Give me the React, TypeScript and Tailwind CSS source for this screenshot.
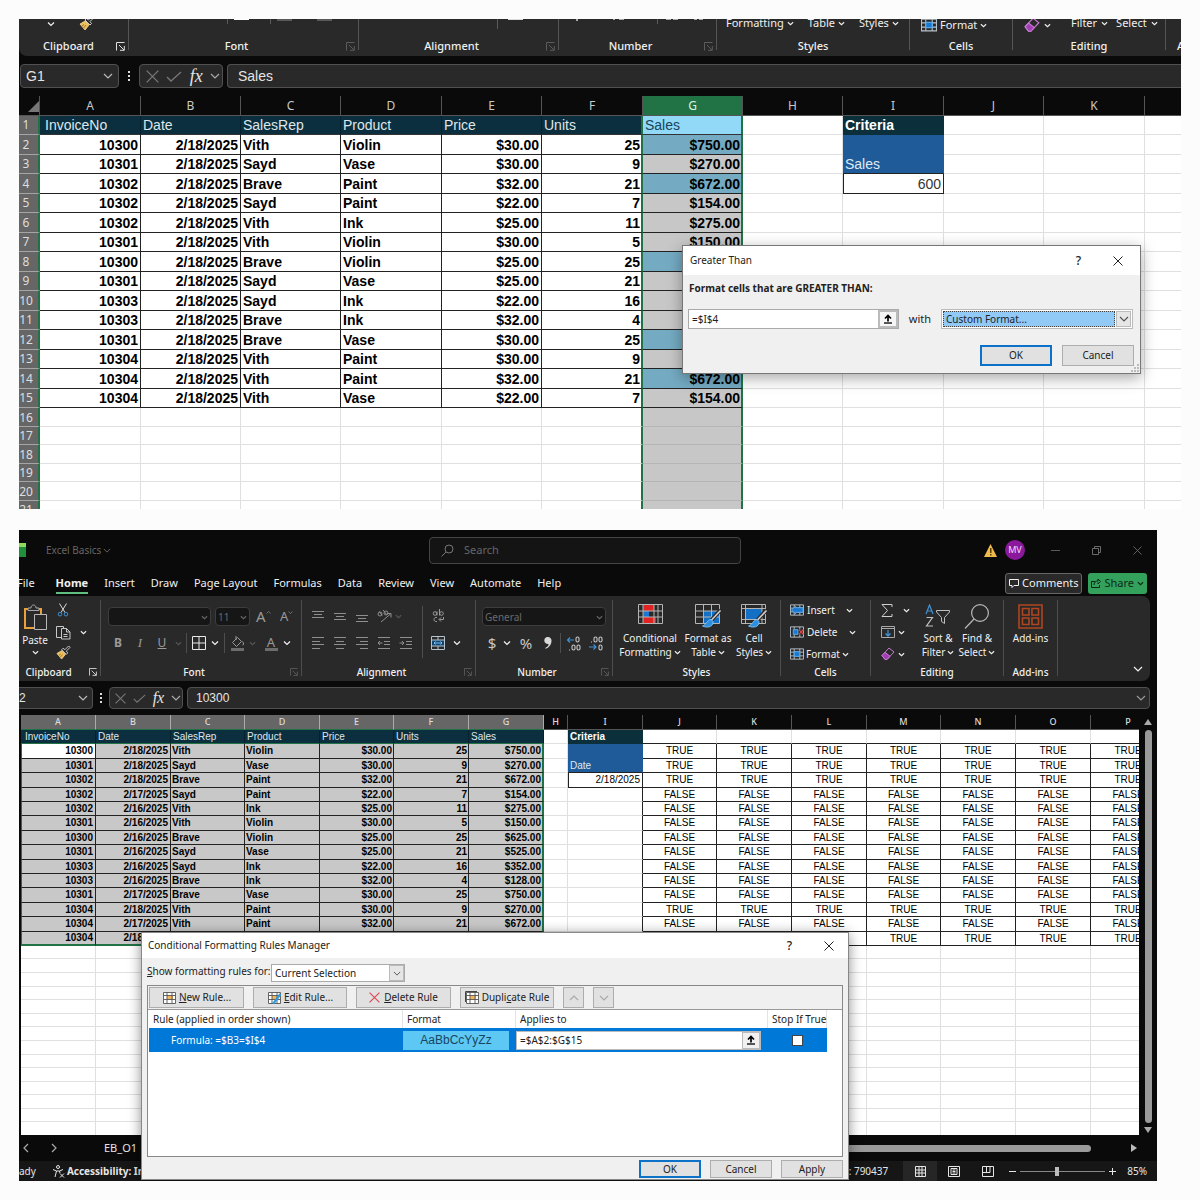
import type { ReactNode } from "react";

const HEADERS = ["InvoiceNo", "Date", "SalesRep", "Product", "Price", "Units", "Sales"];
const RIGHT_ALIGNED = [0, 1, 4, 5, 6];

const SALES_ROWS = [
  ["10300", "2/18/2025", "Vith", "Violin", "$30.00", "25", "$750.00"],
  ["10301", "2/18/2025", "Sayd", "Vase", "$30.00", "9", "$270.00"],
  ["10302", "2/18/2025", "Brave", "Paint", "$32.00", "21", "$672.00"],
  ["10302", "2/18/2025", "Sayd", "Paint", "$22.00", "7", "$154.00"],
  ["10302", "2/18/2025", "Vith", "Ink", "$25.00", "11", "$275.00"],
  ["10301", "2/18/2025", "Vith", "Violin", "$30.00", "5", "$150.00"],
  ["10300", "2/18/2025", "Brave", "Violin", "$25.00", "25", "$625.00"],
  ["10301", "2/18/2025", "Sayd", "Vase", "$25.00", "21", "$525.00"],
  ["10303", "2/18/2025", "Sayd", "Ink", "$22.00", "16", "$352.00"],
  ["10303", "2/18/2025", "Brave", "Ink", "$32.00", "4", "$128.00"],
  ["10301", "2/18/2025", "Brave", "Vase", "$30.00", "25", "$750.00"],
  ["10304", "2/18/2025", "Vith", "Paint", "$30.00", "9", "$270.00"],
  ["10304", "2/18/2025", "Vith", "Paint", "$32.00", "21", "$672.00"],
  ["10304", "2/18/2025", "Vith", "Vase", "$22.00", "7", "$154.00"],
];

const DATES = [
  "2/18/2025", "2/18/2025", "2/18/2025", "2/17/2025", "2/16/2025", "2/16/2025", "2/16/2025",
  "2/16/2025", "2/16/2025", "2/16/2025", "2/17/2025", "2/18/2025", "2/17/2025", "2/18/2025",
];

const DATE_ROWS = SALES_ROWS.map((row, i) => row.map((v, c) => (c === 1 ? DATES[i] : v)));

/* ---------- icons ---------- */

function Chevron({ size = 8, className = "" }: { size?: number; className?: string }) {
  return (
    <svg width={size} height={size} viewBox="0 0 8 8" className={`shrink-0 ${className}`} fill="none" stroke="currentColor" strokeWidth="1.3">
      <path d="M1 2.6 4 5.4 7 2.6" />
    </svg>
  );
}

function ThinChevron({ className = "", up = false }: { className?: string; up?: boolean }) {
  return (
    <svg width="10" height="6" viewBox="0 0 10 6" className={`shrink-0 ${className}`} fill="none" stroke="currentColor" strokeWidth="1.2">
      <path d={up ? "M1 5 5 1 9 5" : "M1 1 5 5 9 1"} />
    </svg>
  );
}

function Launcher({ size, dim }: { size: number; dim: boolean }) {
  return (
    <svg width={size} height={size} viewBox="0 0 9 9" fill="none" stroke={dim ? "#5c5c5c" : "#e0e0e0"} strokeWidth="1">
      <path d="M.5 8.5V.5h8M3 3l5 5M8.3 4v4.3H4" />
    </svg>
  );
}

function Lines({ rows }: { rows: [number, number, number][] }) {
  return (
    <svg width="14" height="14" viewBox="0 0 14 14" stroke="#8f8f8f" strokeWidth="1">
      {rows.map(([y, a, b]) => (
        <path key={y} d={`M${a} ${y}.5H${b}`} />
      ))}
    </svg>
  );
}

function Brush({ size = 16 }: { size?: number }) {
  return (
    <svg width={size} height={size} viewBox="0 0 16 16" fill="none">
      <path d="M1 9 6 6l4 4-4 5z" fill="#efbf58" stroke="#f6d899" strokeWidth=".8" />
      <path d="m3 11 2-1.500M4.500 13 7 10" stroke="#8a6420" strokeWidth=".8" />
      <path d="m6 5 5 5 1.500-1.500L11 6.500 15 2.500 13.500 1 9.500 5 7.500 3.500z" fill="#292929" stroke="#cfcfcf" />
    </svg>
  );
}

function Eraser({ size = 14 }: { size?: number }) {
  return (
    <svg width={size} height={size} viewBox="0 0 14 14" fill="none" stroke="#c47bd0" strokeWidth="1">
      <path d="m1 8.500 7-7.500 5 4-7 7.500H4z" fill="#292929" />
      <path d="m1 8.500 3-3.200 5 4L6 12.500H4z" fill="#a33db5" />
    </svg>
  );
}

function CellGridIcon({ size, kind }: { size: number; kind: "insert" | "delete" | "format" }) {
  return (
    <svg width={size} height={size} viewBox="0 0 15 14" fill="none" stroke="#b9c2cb" strokeWidth="1">
      <path d="M.5 1.500h14v11H.5zM.5 5h14M.5 9h14M4.500 1.500v11M10.500 1.500v11" />
      {kind === "format" && <path d="M4.500 4.500h6v5h-6z" fill="#1b78d0" stroke="#5fb1f2" />}
      {kind === "insert" && <path d="M6 4.500h8v5H6L6 11 1.500 7 6 3z" fill="#1b78d0" stroke="#5fb1f2" />}
      {kind === "delete" && (
        <>
          <path d="M1 4h13v6H1z" fill="#292929" stroke="none" />
          <path d="M3.500 4.500h5v5h-5z" fill="#1b78d0" stroke="#5fb1f2" />
          <path d="m9.500 4.500 5 5m0-5-5 5" stroke="#e04848" strokeWidth="1.300" />
        </>
      )}
    </svg>
  );
}

function PasteIcon() {
  return (
    <svg width="26" height="27" viewBox="0 0 26 27" fill="none">
      <path d="M3 5h16v19H3z" stroke="#e9a13b" strokeWidth="2" />
      <path d="M6 6.500V4h3c0-4 5-4 5 0h3v2.500z" fill="#292929" stroke="#a8a8a8" />
      <path d="M12.500 10.500h12v15h-12z" fill="#292929" stroke="#b8b8b8" />
    </svg>
  );
}

function ScissorsIcon() {
  return (
    <svg width="12" height="14" viewBox="0 0 12 14" fill="none">
      <path d="M2.500.5 8 9.500M9.500.5 4 9.500" stroke="#d8d8d8" />
      <circle cx="3" cy="11.200" r="1.800" stroke="#3f93d6" />
      <circle cx="9" cy="11.200" r="1.800" stroke="#3f93d6" />
    </svg>
  );
}

function CopyIcon() {
  return (
    <svg width="15" height="15" viewBox="0 0 15 15" fill="none" stroke="#c8c8c8">
      <path d="M5 12.500H.5v-11h7v2" />
      <path d="M5.500 3.500h5l3.500 3.500v7h-8.500zM10.500 3.500V7H14M7.500 9.500h4M7.500 11.500h4" />
    </svg>
  );
}

function ConditionalIcon() {
  return (
    <svg width="25" height="21" viewBox="0 0 25 21">
      <path d="M5 1h11v6H5zM5 13h13v6H5z" fill="#e02424" />
      <path d="M5 7h6v6H5z" fill="#1b78d0" />
      <path d="M.5.5h24v19H.5zM.5 7h24M.5 13h24M5 .5v19M16 .5v19M20 .5v19" fill="none" stroke="#b5b5b5" />
    </svg>
  );
}

function StyledTableIcon({ cells }: { cells: boolean }) {
  return (
    <svg width="27" height="24" viewBox="0 0 27 24" fill="none">
      <path d={cells ? "M5 5h16v11H5z" : "M9 7h15v12H9z"} fill="#1470c4" />
      <path d={cells ? "M.5.5h24v19H.5zM.5 4.500h24M4.500.5v19M.5 15.500h24M21 .5v19" : "M.5.5h24v19H.5zM.5 7h24M.5 13h24M8.500.5v19M16.500.5v19"} stroke="#b5b5b5" />
      <path d="m25.500 6-9 10" stroke="#292929" strokeWidth="4" />
      <path d="m25.500 6.500-9 9.500" stroke="#d0d0d0" strokeWidth="1.600" />
      <path d="M16 15.500c-4 0-4 5-8.500 6.500 4 2 11 1.500 10.500-4.500z" fill="#2c8fe0" stroke="#8ecbf7" strokeWidth=".8" />
    </svg>
  );
}

function RuleIcon({ kind }: { kind: "new" | "edit" | "duplicate" }) {
  return (
    <svg width="14" height="13" viewBox="0 0 14 13" fill="none">
      {kind === "duplicate" && <path d="M.5 11V.5H12" stroke="#444" />}
      <path d="M1.500 1.500h12v11h-12z" fill="#fff" />
      <path d="M5 4.500h6v4H5z" fill="#f6b45c" />
      <path d="M1.500 1.500h12v11h-12zM1.500 4.500h12M1.500 8.500h12M5 1.500v11M10 1.500v11" stroke="#555" strokeWidth=".9" />
      {kind === "edit" && <path d="m13.500 3-6 8-1.500 1.500" stroke="#2f9be0" strokeWidth="2.400" />}
    </svg>
  );
}

function CollapseRefIcon() {
  return (
    <svg width="10" height="10" viewBox="0 0 10 10" fill="none" stroke="#000">
      <path d="M5 1v6.500M2 4.500l3-3 3 3" strokeWidth="1.700" />
      <path d="M1 9h8" strokeWidth="1.300" />
    </svg>
  );
}

function CloseX({ size = 10, className = "" }: { size?: number; className?: string }) {
  return (
    <svg width={size} height={size} viewBox="0 0 10 10" className={className} fill="none" stroke="currentColor">
      <path d="m.5.5 9 9m0-9-9 9" />
    </svg>
  );
}

/* ---------- ribbon ---------- */

type GroupProps = {
  label: string;
  width: string;
  launcher?: "on" | "off";
  large?: boolean;
  children?: ReactNode;
};

function Group({ label, width, launcher, large = false, children }: GroupProps) {
  return (
    <>
      <div className={`flex shrink-0 flex-col ${width}`}>
        <div className="min-h-0 flex-1">{children}</div>
        <div className={large ? "flex h-5 items-center text-[11px] font-medium" : "flex h-[18px] items-center text-[10px] font-medium"}>
          <span className="flex-1 text-center whitespace-nowrap">{label}</span>
          {launcher && (
            <button aria-label={`${label} settings`} className="flex w-[14px] items-center justify-end pr-[3px]">
              <Launcher size={large ? 9 : 8} dim={launcher === "off"} />
            </button>
          )}
        </div>
      </div>
      <div className={large ? "mb-[6px] w-px bg-[#555]" : "mt-1 mb-[5px] w-px bg-[#4d4d4d]"} />
    </>
  );
}

function IconButton({ label, width = "w-[22px]", className = "", children }: { label: string; width?: string; className?: string; children: ReactNode }) {
  return (
    <button aria-label={label} className={`flex h-5 shrink-0 items-center justify-center text-[#9a9a9a] ${width} ${className}`}>
      {children}
    </button>
  );
}

function BigButton({ icon, top, bottom, width }: { icon: ReactNode; top: string; bottom?: string; width: string }) {
  return (
    <button className={`flex flex-col items-center pt-2 text-[10px] leading-[14px] ${width}`}>
      <span className="flex h-[27px] items-start justify-center">{icon}</span>
      <span className="whitespace-nowrap">{top}</span>
      {bottom && (
        <span className="flex items-center gap-[2px] whitespace-nowrap">
          {bottom}
          <Chevron size={7} />
        </span>
      )}
    </button>
  );
}

function CroppedRibbon() {
  return (
    <div className="h-[37px] overflow-hidden bg-[#0a0a0a]">
      <div className="flex h-[37px] rounded-bl-lg bg-[#292929] pl-1 text-[#f0f0f0]">
        <Group label="Clipboard" width="w-[105px]" launcher="on" large>
          <div className="flex pl-6">
            <Chevron className="mt-[1px]" />
            <span className="-mt-[4px] ml-6"><Brush /></span>
          </div>
        </Group>
        <Group label="Font" width="w-[229px]" launcher="off" large>
          <svg width="229" height="8" fill="#5a5a5a">
            <path d="M98 0h1v5h-1zM141 0h1v5h-1zM148 0h15v2h-15zM188 0h15v2h-15z" />
            <path d="M105 0h15v1h-15z" fill="#fff" />
          </svg>
        </Group>
        <Group label="Alignment" width="w-[199px]" launcher="off" large>
          <svg width="199" height="12" fill="#5a5a5a">
            <path d="M138 0h1v10h-1z" />
            <path d="M149 0h15v1h-15z" fill="#ddd" />
          </svg>
        </Group>
        <Group label="Number" width="w-[157px]" launcher="off" large>
          <svg width="157" height="8" fill="#aaa">
            <path d="M98 0h1v5h-1z" fill="#5a5a5a" />
            <path d="M17 0h2v2h-2zM54 0h2v1h-2zM60 0h5v1h-5zM107 0h5v1h-5zM114 0h5v1h-5zM135 0h3v1h-3zM140 0h4v1h-4z" />
          </svg>
        </Group>
        <Group label="Styles" width="w-[192px]" large>
          <div className="-mt-[3px] flex gap-[14px] pl-[9px] text-[11px] leading-[14px]">
            {["Formatting", "Table", "Styles"].map((t) => (
              <button key={t} className="flex items-center gap-[3px]">
                {t}
                <Chevron size={7} />
              </button>
            ))}
          </div>
        </Group>
        <Group label="Cells" width="w-[102px]" large>
          <button className="-mt-[2px] flex items-center gap-[3px] pl-[11px] text-[11px] leading-[14px]">
            <CellGridIcon size={16} kind="format" />
            Format
            <Chevron size={7} />
          </button>
        </Group>
        <Group label="Editing" width="w-[152px]" large>
          <div className="-mt-[3px] flex items-start pl-[11px] text-[11px] leading-[14px]">
            <button aria-label="Clear" className="flex h-[18px] items-center gap-1">
              <Eraser size={16} />
              <Chevron size={7} />
            </button>
            <button className="ml-5 flex items-center gap-1">
              Filter
              <Chevron size={7} />
            </button>
            <button className="ml-2 flex items-center gap-1">
              Select
              <Chevron size={7} />
            </button>
          </div>
        </Group>
        <div className="flex flex-1 items-end overflow-hidden pl-[11px] text-[11px] leading-5 font-medium whitespace-nowrap">Add-ins</div>
      </div>
    </div>
  );
}

const top3: [number, number, number][] = [[2, 1, 13], [5, 3, 11], [8, 1, 13]];
const mid3: [number, number, number][] = [[4, 1, 13], [7, 3, 11], [10, 1, 13]];
const bot3: [number, number, number][] = [[6, 1, 13], [9, 3, 11], [12, 1, 13]];
const left4: [number, number, number][] = [[1, 1, 13], [5, 1, 9], [8, 1, 13], [12, 1, 9]];
const center4: [number, number, number][] = [[1, 1, 13], [5, 3, 11], [8, 1, 13], [12, 3, 11]];
const right4: [number, number, number][] = [[1, 1, 13], [5, 5, 13], [8, 1, 13], [12, 5, 13]];

function IndentIcon({ out = false }: { out?: boolean }) {
  return (
    <svg width="14" height="14" viewBox="0 0 14 14" fill="none" stroke="#8f8f8f">
      <path d="M1 1.500h12M7 5.500h6M7 8.500h6M1 12.500h12" />
      <path d={out ? "M5.500 7H1m2-2L1 7l2 2" : "M.5 7H5M3 5l2 2-2 2"} />
    </svg>
  );
}

function DecimalIcon({ more = false }: { more?: boolean }) {
  return (
    <svg width="15" height="15" viewBox="0 0 15 15" fill="none" stroke="#c8c8c8" strokeWidth="1.100">
      {more ? (
        <>
          <rect x="10" y="1" width="3" height="5" rx="1.500" />
          <rect x="6" y="9" width="3" height="5" rx="1.500" />
          <rect x="11" y="9" width="3" height="5" rx="1.500" />
          <path d="M3.500 13.500v1" />
          <path d="M8 4H1.500M4 1.500 1.500 4 4 6.500" stroke="#3f93d6" />
        </>
      ) : (
        <>
          <rect x="6" y="1" width="3" height="5" rx="1.500" />
          <rect x="11" y="1" width="3" height="5" rx="1.500" />
          <rect x="11" y="9" width="3" height="5" rx="1.500" />
          <path d="M3.500 5.500v1" />
          <path d="M1 11h7M5.500 8.500 8 11l-2.500 2.500" stroke="#3f93d6" />
        </>
      )}
    </svg>
  );
}

function Divider({ className = "" }: { className?: string }) {
  return <div className={`w-px bg-[#4d4d4d] ${className}`} />;
}

function DarkSelect({ label, value, width }: { label: string; value: string; width: string }) {
  return (
    <div className={`relative h-[19px] rounded border border-[#3d3d3d] bg-[#161616] ${width}`}>
      <select aria-label={label} className="block h-full w-full appearance-none pl-[2px] text-[10px] leading-none text-[#6a6a6a]">
        <option>{value}</option>
      </select>
      <Chevron size={7} className="pointer-events-none absolute top-[6px] right-[2px] text-[#666]" />
    </div>
  );
}

function Ribbon() {
  return (
    <div className="mr-[7px] h-[85px] overflow-hidden rounded-r-lg bg-[#292929] text-[#f0f0f0]">
      <div className="-ml-2 flex h-full">
        <Group label="Clipboard" width="w-[89px]" launcher="on">
          <div className="flex pl-[7px]">
            <button className="flex w-[34px] flex-col items-center pt-2 text-[10px] leading-[14px]">
              <PasteIcon />
              <span className="mt-[2px]">Paste</span>
              <Chevron size={7} className="mt-[2px]" />
            </button>
            <div className="flex flex-col pt-1">
              <IconButton label="Cut"><ScissorsIcon /></IconButton>
              <div className="flex">
                <IconButton label="Copy" className="mt-[2px]"><CopyIcon /></IconButton>
                <Chevron size={7} className="mt-[9px] ml-[6px]" />
              </div>
              <IconButton label="Format Painter"><Brush size={15} /></IconButton>
            </div>
          </div>
        </Group>
        <Group label="Font" width="w-[200px]" launcher="off">
          <div className="flex gap-1 pt-[11px] pl-[7px]">
            <DarkSelect label="Font" value="" width="w-[103px]" />
            <DarkSelect label="Font size" value="11" width="w-[35px]" />
            <div className="flex pl-[2px] text-[#9a9a9a]">
              <button aria-label="Increase font size" className="flex w-5 items-center text-[15px] leading-none">
                A<ThinChevron up className="-mt-2 h-[3px] w-[5px]" />
              </button>
              <button aria-label="Decrease font size" className="ml-1 flex w-5 items-center text-[13px] leading-none">
                A<ThinChevron className="-mt-2 h-[3px] w-[5px]" />
              </button>
            </div>
          </div>
          <div className="mt-[7px] flex items-center pl-[6px] text-[12px] text-[#9a9a9a]">
            <IconButton label="Bold"><b>B</b></IconButton>
            <IconButton label="Italic"><i className="font-['Liberation_Serif',serif] text-[13px]">I</i></IconButton>
            <IconButton label="Underline"><u>U</u></IconButton>
            <Chevron size={7} className="ml-[2px] text-[#555]" />
            <Divider className="ml-1 h-5" />
            <IconButton label="Borders" width="w-6">
              <svg width="14" height="14" viewBox="0 0 14 14" fill="none" stroke="#e8e8e8"><path d="M.5.5h13v13H.5zM7 .5v13M.5 7h13" /></svg>
            </IconButton>
            <Chevron className="text-[#f0f0f0]" />
            <Divider className="ml-[5px] h-5" />
            <IconButton label="Fill Color" width="w-6">
              <svg width="15" height="15" viewBox="0 0 15 15" fill="none" stroke="#9a9a9a">
                <path d="m2.500 6.500 5-5 4 4-5 5zM6 0v4M12.500 5.500c1.500 2 1.500 3.500 0 3.500" />
                <path d="M1 12h13v3H1z" fill="#6d6d6d" stroke="none" />
              </svg>
            </IconButton>
            <Chevron size={7} className="text-[#555]" />
            <IconButton label="Font Color" width="w-6" className="ml-[3px] flex-col">
              <span className="text-[13px] leading-[12px]">A</span>
              <span className="h-[3px] w-[13px] bg-[#6d6d6d]" />
            </IconButton>
            <Chevron className="text-[#f0f0f0]" />
          </div>
        </Group>
        <Group label="Alignment" width="w-[173px]" launcher="off">
          <div className="flex pt-[10px]">
            <div className="w-[120px] pl-[5px]">
              <div className="flex items-center">
                <IconButton label="Top Align"><Lines rows={top3} /></IconButton>
                <IconButton label="Middle Align"><Lines rows={mid3} /></IconButton>
                <IconButton label="Bottom Align"><Lines rows={bot3} /></IconButton>
                <IconButton label="Orientation">
                  <svg width="15" height="14" viewBox="0 0 15 14" fill="none" stroke="#8f8f8f">
                    <circle cx="3" cy="5" r="2" />
                    <path d="M5 6.500 2.500 2.500M6 1l4 5" /><circle cx="9" cy="4" r="2" />
                    <path d="M4 13 13.500 5M10 4.500h4v4" />
                  </svg>
                </IconButton>
                <Chevron size={7} className="text-[#555]" />
              </div>
              <div className="mt-[7px] flex">
                <IconButton label="Align Left"><Lines rows={left4} /></IconButton>
                <IconButton label="Center"><Lines rows={center4} /></IconButton>
                <IconButton label="Align Right"><Lines rows={right4} /></IconButton>
                <IconButton label="Decrease Indent"><IndentIcon out /></IconButton>
                <IconButton label="Increase Indent"><IndentIcon /></IconButton>
              </div>
            </div>
            <Divider className="h-[52px]" />
            <div className="pl-1">
              <IconButton label="Wrap Text">
                <svg width="13" height="14" viewBox="0 0 13 14" fill="none" stroke="#9a9a9a">
                  <circle cx="3" cy="4.500" r="1.800" /><path d="M5 2.500v4M7.500 0v6.500" /><circle cx="9.500" cy="4.500" r="1.800" />
                  <path d="M5 8.500c-4-1-4 5 0 4M11.500 8v2.500h-4M9 8.500l-2 2 2 2" />
                </svg>
              </IconButton>
              <div className="mt-[7px] flex items-center">
                <IconButton label="Merge">
                  <svg width="14" height="14" viewBox="0 0 14 14" fill="none" stroke="#b5c4d0">
                    <path d="M1 4h12v6H1z" fill="#12456f" stroke="none" />
                    <path d="M.5.5h13v13H.5zM.5 4h13M.5 10h13M7 .5V4M7 10v3.500" />
                    <path d="M3 7h8M4.500 5.500 3 7l1.500 1.500M9.500 5.500 11 7 9.500 8.500" stroke="#7fc0f0" />
                  </svg>
                </IconButton>
                <Chevron className="ml-1" />
              </div>
            </div>
          </div>
        </Group>
        <Group label="Number" width="w-[136px]" launcher="off">
          <div className="pt-[11px] pl-[6px]">
            <DarkSelect label="Number format" value="General" width="w-[124px]" />
          </div>
          <div className="mt-[7px] flex items-center pl-[5px]">
            <IconButton label="Currency"><span className="text-[15px] text-[#c8c8c8]">$</span></IconButton>
            <Chevron />
            <IconButton label="Percent" className="ml-1"><span className="text-[15px] text-[#c8c8c8]">%</span></IconButton>
            <IconButton label="Comma">
              <svg width="8" height="12" viewBox="0 0 8 12" fill="#d8d8d8"><path d="M4 0a3.500 3.500 0 0 1 3.500 3.800C7.500 8 5 10.500 1.500 12v-1.200C3.500 10 4.700 8.500 4.600 6.900A3.500 3.500 0 1 1 4 0z" /></svg>
            </IconButton>
            <Divider className="ml-[1px] h-5" />
            <IconButton label="Increase Decimal" width="w-6"><DecimalIcon more /></IconButton>
            <IconButton label="Decrease Decimal" width="w-5"><DecimalIcon /></IconButton>
          </div>
        </Group>
        <Group label="Styles" width="w-[167px]">
          <div className="flex pl-1">
            <BigButton icon={<ConditionalIcon />} top="Conditional" bottom="Formatting" width="w-[66px]" />
            <BigButton icon={<StyledTableIcon cells={false} />} top="Format as" bottom="Table" width="w-[50px]" />
            <BigButton icon={<StyledTableIcon cells />} top="Cell" bottom="Styles" width="w-[42px]" />
          </div>
        </Group>
        <Group label="Cells" width="w-[89px]">
          <div className="flex flex-col pt-[3px] pl-[9px] text-[10px]">
            <button className="flex h-[22px] items-center gap-[3px]">
              <CellGridIcon size={14} kind="insert" />
              <span className="w-9 text-left">Insert</span>
              <Chevron size={7} />
            </button>
            <button className="flex h-[22px] items-center gap-[3px]">
              <CellGridIcon size={14} kind="delete" />
              <span className="w-[39px] text-left">Delete</span>
              <Chevron size={7} />
            </button>
            <button className="flex h-[22px] items-center gap-[2px]">
              <CellGridIcon size={14} kind="format" />
              <span>Format</span>
              <Chevron size={7} />
            </button>
          </div>
        </Group>
        <Group label="Editing" width="w-[132px]">
          <div className="flex">
            <div className="flex w-[47px] flex-col pt-[3px] pl-[10px]">
              <button aria-label="AutoSum" className="flex h-[22px] items-center gap-[10px]">
                <svg width="12" height="13" viewBox="0 0 12 13" fill="none" stroke="#d0d0d0"><path d="M11 3V.5H1L6.500 6.500 1 12.500h10V10" /></svg>
                <Chevron size={7} />
              </button>
              <button aria-label="Fill" className="flex h-[22px] items-center gap-[3px]">
                <svg width="14" height="12" viewBox="0 0 14 12" fill="none" stroke="#a8a8a8">
                  <path d="M.5.5h13v11H.5zM.5 2.500h13" /><path d="M7 4v6M4.500 7.500 7 10l2.500-2.500" stroke="#3f93d6" strokeWidth="1.300" />
                </svg>
                <Chevron size={7} />
              </button>
              <button aria-label="Clear" className="flex h-[22px] items-center gap-[3px]">
                <Eraser />
                <Chevron size={7} />
              </button>
            </div>
            <BigButton
              width="w-[40px]"
              top="Sort &"
              bottom="Filter"
              icon={
                <svg width="26" height="24" viewBox="0 0 26 24" fill="none">
                  <path d="M1 10 4.500 1 8 10M2.300 7h4.400" stroke="#3f93d6" strokeWidth="1.200" />
                  <path d="M1.500 13.500h6L1.500 22h6.500" stroke="#c0c0c0" strokeWidth="1.200" />
                  <path d="M11.500 6.500h13v1.500l-5 5.500v6l-3-2v-4l-5-5.500z" stroke="#c0c0c0" />
                </svg>
              }
            />
            <BigButton
              width="w-[38px]"
              top="Find &"
              bottom="Select"
              icon={
                <svg width="26" height="26" viewBox="0 0 26 26" fill="none" stroke="#b8b8b8" strokeWidth="1.200">
                  <circle cx="16" cy="9" r="8.400" /><path d="M10 15 1 24.500" />
                </svg>
              }
            />
          </div>
        </Group>
        <Group label="Add-ins" width="w-[53px]">
          <BigButton
            width="w-[53px]"
            top="Add-ins"
            icon={
              <svg width="25" height="25" viewBox="0 0 25 25" fill="none" stroke="#b0451f" strokeWidth="1.600">
                <path d="M1 1h23v23H1zM4.500 4.500h6.500v6.500H4.500zM14 4.500h6.500v6.500H14zM4.500 14h6.500v6.500H4.500zM14 14h6.500v6.500H14z" />
              </svg>
            }
          />
        </Group>
        <div className="flex flex-1 items-end justify-end pr-[7px] pb-[9px]">
          <button aria-label="Collapse ribbon"><ThinChevron /></button>
        </div>
      </div>
    </div>
  );
}

/* ---------- formula bar ---------- */

function FormulaBar({ cell, value, large = false }: { cell: string; value: string; large?: boolean }) {
  const box = "flex items-center border border-[#505050] bg-[#292929]";
  return (
    <div className={`flex items-center bg-[#0a0a0a] font-['Liberation_Sans',sans-serif] text-[#e4e4e4] ${large ? "h-10 text-[14px]" : "h-[34px] pr-[7px] text-[12px]"}`}>
      <div className={`${box} shrink-0 ${large ? "ml-[1px] h-6 w-[99px] rounded pr-[5px] pl-[5px]" : "h-[22px] w-[74px] rounded-r border-l-0 pr-1"}`}>
        <input aria-label="Name box" defaultValue={cell} className="min-w-0 flex-1 bg-transparent outline-none" />
        <ThinChevron className="text-[#bbb]" />
      </div>
      <div className={`flex flex-col items-center gap-[2px] ${large ? "w-5" : "w-4"}`}>
        <i className="size-[2px] bg-[#ddd]" />
        <i className="size-[2px] bg-[#ddd]" />
        <i className="size-[2px] bg-[#ddd]" />
      </div>
      <div className={`${box} shrink-0 justify-between rounded ${large ? "h-6 w-[84px] px-[2px] pl-[6px]" : "h-[22px] w-[74px] pr-[1px] pl-[5px]"}`}>
        <button aria-label="Cancel"><CloseX size={large ? 13 : 11} className="text-[#777]" /></button>
        <button aria-label="Enter">
          <svg width={large ? 16 : 13} height="11" viewBox="0 0 16 11" fill="none" stroke="#777" strokeWidth="1.300"><path d="m1 6 4 4L15 1" /></svg>
        </button>
        <button aria-label="Insert function" className={`font-['Liberation_Serif',serif] italic ${large ? "text-[18px]" : "text-[16px]"} leading-none`}>fx</button>
        <ThinChevron className="text-[#aaa]" />
      </div>
      <div className={`${box} ml-1 min-w-0 flex-1 ${large ? "h-6 rounded-l border-r-0 pl-[10px]" : "h-[22px] rounded pr-[3px] pl-2"}`}>
        <input aria-label="Formula" defaultValue={value} className="min-w-0 flex-1 bg-transparent outline-none" />
        {!large && <ThinChevron className="text-[#999]" />}
      </div>
    </div>
  );
}

/* ---------- first sheet ---------- */

const SALES_COLS = [
  "w-[21px]", "w-[101px]", "w-[100px]", "w-[100px]", "w-[101px]", "w-[100px]", "w-[101px]",
  "w-[100px]", "w-[100px]", "w-[101px]", "w-[100px]", "w-[101px]", "",
];

const HIGHLIGHTED = [0, 2, 6, 10, 12];

function SalesSheet() {
  const letters = "ABCDEFGHIJK".split("");
  const grid = "border-r border-b border-[#e0e0e0] p-0";
  return (
    <table className="w-full table-fixed border-separate border-spacing-0 bg-white font-['Liberation_Sans',sans-serif] text-[14px] leading-[18px] text-black">
      <colgroup>
        {SALES_COLS.map((w, i) => <col key={i} className={w} />)}
      </colgroup>
      <thead className="bg-[#0a0a0a] font-['Noto_Sans',sans-serif] text-[12px] text-[#c9c9c9]">
        <tr className="h-5">
          <th className="border-r border-b border-[#555] p-0">
            <svg width="12" height="12" className="ml-auto" fill="#777"><path d="M12 1v11H1z" /></svg>
          </th>
          {letters.map((l) => (
            <th key={l} className={`border-r border-b border-[#555] p-0 font-normal ${l === "G" ? "bg-[#217346] text-[#d9f2e3]" : ""}`}>{l}</th>
          ))}
          <th className="border-b border-[#555] p-0" />
        </tr>
      </thead>
      <tbody>
        {Array.from({ length: 21 }, (_, i) => {
          const n = i + 1;
          const row = SALES_ROWS[i - 1];
          const height = n > 15 ? (n % 2 ? "h-[18px]" : "h-[19px]") : n % 2 ? "h-[19px]" : "h-[20px]";
          return (
            <tr key={n} className={`${height} ${n > 15 ? "leading-[17px]" : ""}`}>
              <th className="border-r-2 border-b border-r-[#217346] border-b-[#a5a5a5] bg-[#666] p-0 pr-[5px] font-['Noto_Sans',sans-serif] text-[12px] font-normal text-[#dedede]">{n}</th>
              {HEADERS.map((h, c) => {
                // the selection outline runs down both sides of the Sales column
                const side = c >= 5 ? "border-r-2 border-r-[#217346]" : n === 1 ? "border-r border-r-[#06222e]" : row ? "border-r border-r-[#222]" : "border-r border-r-[#e0e0e0]";
                if (n === 1)
                  return (
                    <th key={h} className={`border-b border-b-[#333] p-0 text-left font-normal ${side} ${c === 6 ? "bg-[#92d8f7] text-[#17455c]" : "bg-[#0c2f40] text-[#dfe7ea]"} ${c ? "pl-[2px]" : "pl-[5px]"}`}>{h}</th>
                  );
                const fill = c === 6 ? (row && HIGHLIGHTED.includes(i - 1) ? "bg-[#74abc3]" : "bg-[#c7c7c7]") : "";
                const bottom = row ? "border-b border-b-[#222]" : c === 6 ? "border-b border-b-[#b5b5b5]" : "border-b border-b-[#e0e0e0]";
                const align = RIGHT_ALIGNED.includes(c) ? (c >= 5 ? "pr-[1px] text-right" : "pr-[2px] text-right") : "pl-[2px] text-left";
                return <td key={h} className={`p-0 font-bold ${side} ${bottom} ${fill} ${align}`}>{row?.[c]}</td>;
              })}
              <td className={grid} />
              {n === 1 && <th className="border-r border-b border-[#0c2f3c] bg-[#0c2f3c] p-0 pl-[2px] text-left text-white">Criteria</th>}
              {n === 2 && <td rowSpan={2} className="border-r border-b border-r-[#205b99] border-b-[#222] bg-[#205b99] p-0 pl-[2px] align-bottom text-[#dfe9f4]">Sales</td>}
              {n === 4 && <td className="border-r border-b border-l border-[#222] p-0 pr-[2px] text-right text-[#333]">600</td>}
              {n > 4 && <td className={grid} />}
              <td className={grid} />
              <td className={grid} />
              <td className="border-b border-[#e0e0e0] p-0" />
            </tr>
          );
        })}
      </tbody>
    </table>
  );
}

function DialogTitle({ title }: { title: string }) {
  return (
    <div className="flex items-center bg-white text-[#222]">
      <h2 className="flex-1 text-[10px]">{title}</h2>
      <button aria-label="Help" className="text-[12px] font-medium">?</button>
      <button aria-label="Close" className="ml-8"><CloseX /></button>
    </div>
  );
}

function DialogButton({ children, primary = false, className = "" }: { children: ReactNode; primary?: boolean; className?: string }) {
  return (
    <button className={`flex items-center justify-center bg-[#e1e1e1] text-[10px] ${primary ? "border-2 border-[#0c72c9]" : "border border-[#adadad]"} ${className}`}>
      {children}
    </button>
  );
}

function GreaterThanDialog() {
  return (
    <div role="dialog" aria-label="Greater Than" className="absolute top-[149px] left-[663px] h-[129px] w-[459px] border border-[#777] bg-[#f0f0f0] text-[#222] shadow-[0_4px_14px_rgba(0,0,0,0.35)]">
      <div className="[&>div]:h-[29px] [&>div]:pr-[17px] [&>div]:pl-[7px]">
        <DialogTitle title="Greater Than" />
      </div>
      <label htmlFor="threshold" className="mt-[5px] ml-[6px] block text-[10px] leading-4 font-bold">Format cells that are GREATER THAN:</label>
      <div className="mt-[13px] flex h-5 items-center pr-[7px] pl-[5px] text-[10px]">
        <div className="flex h-5 w-[211px] border border-[#aaa] bg-white">
          <input id="threshold" defaultValue="=$I$4" className="min-w-0 flex-1 pl-[3px] outline-none" />
          <button aria-label="Collapse dialog" className="flex w-5 items-center justify-center border-2 border-[#bbb] bg-[#f5f5f5]"><CollapseRefIcon /></button>
        </div>
        <label htmlFor="format" className="flex-1 text-center text-[11px]">with</label>
        <div className="relative flex h-5 w-[192px] border border-[#bbb] bg-white p-[1px]">
          <select id="format" className="w-[172px] appearance-none border border-dotted border-[#444] bg-[#91c9f7] pl-[2px] leading-none">
            <option>Custom Format...</option>
          </select>
          <span className="pointer-events-none ml-[1px] flex flex-1 items-center justify-center border border-[#bbb] bg-[#e6e6e6]"><ThinChevron className="text-[#555]" /></span>
        </div>
      </div>
      <div className="mt-4 flex justify-end gap-[10px] pr-[6px]">
        <DialogButton primary className="h-[21px] w-[72px]">OK</DialogButton>
        <DialogButton className="h-[21px] w-[72px]">Cancel</DialogButton>
      </div>
      <svg width="8" height="8" className="absolute right-[1px] bottom-[1px]" fill="#bbb">
        <path d="M6 0h2v2H6zM3 3h2v2H3zM6 3h2v2H6zM0 6h2v2H0zM3 6h2v2H3zM6 6h2v2H6z" />
      </svg>
    </div>
  );
}

/* ---------- second sheet ---------- */

const DATE_COLS = [
  "w-[75px]", "w-[75px]", "w-[74px]", "w-[75px]", "w-[74px]", "w-[75px]", "w-[75px]", "w-[24px]",
  "w-[75px]", "w-[74px]", "w-[75px]", "w-[75px]", "w-[74px]", "w-[75px]", "w-[75px]", "w-[75px]",
];

const RULE_HITS = [2, 3, 4, 13, 15];

function DateSheet() {
  const letters = "ABCDEFGHIJKLMNOP".split("");
  const results = letters.slice(9);
  const grid = "border-r border-b border-[#e0e0e0] p-0";
  return (
    <table className="w-full table-fixed border-separate border-spacing-0 bg-white font-['Liberation_Sans',sans-serif] text-[10px] leading-[12px] text-black">
      <colgroup>
        {DATE_COLS.map((w, i) => <col key={i} className={w} />)}
      </colgroup>
      <thead className="font-['Noto_Sans',sans-serif] text-[9px] text-[#dcdcdc]">
        <tr className="h-[15px]">
          {letters.map((l, c) => (
            <th key={l} className={`border-r border-b p-0 font-medium ${c < 7 ? "border-r-[#aaa] border-b-[#217346] bg-[#666]" : "border-[#555] bg-[#0a0a0a]"}`}>{l}</th>
          ))}
        </tr>
      </thead>
      <tbody>
        {Array.from({ length: 29 }, (_, i) => {
          const n = i + 1;
          const row = DATE_ROWS[i - 1];
          const tall = n <= 15 ? n % 5 === 2 || n % 5 === 4 : false;
          const short = n > 15 && [1, 4, 6, 9, 11, 13].includes(n - 15);
          return (
            <tr key={n} className={tall ? "h-[15px]" : short ? "h-[13px]" : "h-[14px]"}>
              {HEADERS.map((h, c) => {
                if (n === 1)
                  return <th key={h} className={`border-r border-b border-r-[#06222e] border-b-[#217346] bg-[#0c2f40] p-0 text-left font-normal text-[#dfe7ea] ${c ? "pl-[2px]" : "pl-1"}`}>{h}</th>;
                const left = c === 0 && row ? "border-l border-l-[#217346]" : "";
                if (!row) return <td key={h} className={grid} />;
                const right = c === 6 ? "border-r-2 border-r-[#217346]" : "border-r border-r-[#222]";
                const bottom = n === 15 ? "border-b-2 border-b-[#217346]" : "border-b border-b-[#222]";
                const align = RIGHT_ALIGNED.includes(c) ? (c < 2 ? "pr-[2px] text-right" : "pr-[1px] text-right") : "pl-[1px] text-left";
                const fill = n === 2 && c === 0 ? "bg-white" : "bg-[#c8c8c8]";
                return <td key={h} className={`p-0 font-bold ${left} ${right} ${bottom} ${align} ${fill}`}>{row[c]}</td>;
              })}
              <td className={grid} />
              {n === 1 && <th className="border-r border-b border-[#0c2f3c] bg-[#0c2f3c] p-0 pl-[2px] text-left text-white">Criteria</th>}
              {n === 2 && <td rowSpan={2} className="border-r border-b border-r-[#205b99] border-b-[#222] bg-[#205b99] p-0 pl-[2px] align-bottom text-[#dfe9f4]">Date</td>}
              {n === 4 && <td className="border-r border-b border-l border-[#222] p-0 pr-[2px] text-right">2/18/2025</td>}
              {n > 4 && <td className={row ? "border-r border-b border-r-[#222] border-b-[#e0e0e0] p-0" : grid} />}
              {results.map((l) => (
                <td key={l} className={n <= 15 ? `border-b border-b-[#222] p-0 text-center ${n === 1 ? "border-r border-r-[#e0e0e0]" : "border-r border-r-[#222]"}` : grid}>
                  {row ? (RULE_HITS.includes(n) ? "TRUE" : "FALSE") : null}
                </td>
              ))}
            </tr>
          );
        })}
      </tbody>
    </table>
  );
}

function RulesDialog() {
  return (
    <div role="dialog" aria-label="Conditional Formatting Rules Manager" className="absolute top-[402px] left-[122px] flex h-[248px] w-[708px] flex-col border border-[#888] bg-[#f0f0f0] text-[10px] text-[#222] shadow-[0_2px_12px_rgba(0,0,0,0.45)]">
      <div className="[&>div]:h-[25px] [&>div]:pr-[14px] [&>div]:pl-[6px]">
        <DialogTitle title="Conditional Formatting Rules Manager" />
      </div>
      <div className="flex items-start pt-[6px] pl-[5px]">
        <label htmlFor="scope" className="w-[124px] leading-[14px] whitespace-nowrap"><u>S</u>how formatting rules for:</label>
        <div className="relative h-[18px] w-[134px] border border-[#aaa] bg-white">
          <select id="scope" className="block h-full w-full appearance-none pl-[3px] leading-none">
            <option>Current Selection</option>
          </select>
          <span className="pointer-events-none absolute top-0 right-0 flex h-4 w-[15px] items-center justify-center border border-[#bbb] bg-[#e6e6e6]"><ThinChevron className="h-[5px] w-2 text-[#555]" /></span>
        </div>
      </div>
      <div className="mx-[5px] mt-[3px] flex flex-1 flex-col border border-[#888]">
        <div className="flex h-[24px] items-center gap-[9px] border-b border-[#999] pl-[1px]">
          <DialogButton className="h-[21px] w-[95px] gap-[3px]"><RuleIcon kind="new" /><span><u>N</u>ew Rule...</span></DialogButton>
          <DialogButton className="h-[21px] w-[94px] gap-[3px]"><RuleIcon kind="edit" /><span><u>E</u>dit Rule...</span></DialogButton>
          <DialogButton className="h-[21px] w-[95px] gap-1"><CloseX size={11} className="text-[#e0444c]" /><span><u>D</u>elete Rule</span></DialogButton>
          <DialogButton className="h-[21px] w-[94px] gap-[3px]"><RuleIcon kind="duplicate" /><span>Dupli<u>c</u>ate Rule</span></DialogButton>
          <DialogButton className="h-[21px] w-[21px] text-[#aaa]"><ThinChevron up /></DialogButton>
          <DialogButton className="h-[21px] w-[21px] text-[#aaa]"><ThinChevron /></DialogButton>
        </div>
        <div className="flex-1 bg-white pl-[1px]">
          <table className="w-[678px] table-fixed border-separate border-spacing-0 text-left">
            <colgroup>
              <col className="w-[254px]" />
              <col className="w-[113px]" />
              <col />
              <col className="w-[59px]" />
            </colgroup>
            <thead>
              <tr className="h-[18px] [&>th]:border-r [&>th]:border-[#e3e3e3] [&>th]:p-0 [&>th]:pl-1 [&>th]:font-normal">
                <th>Rule (applied in order shown)</th>
                <th>Format</th>
                <th>Applies to</th>
                <th className="whitespace-nowrap">Stop If True</th>
              </tr>
            </thead>
            <tbody>
              <tr className="h-6 bg-[#0078d7] text-white">
                <td className="p-0 pl-[22px]">Formula: =$B3=$I$4</td>
                <td className="p-0">
                  <div className="h-[19px] w-[106px] bg-[#5ec8f5] text-center font-['Liberation_Sans',sans-serif] text-[12px] leading-[19px] text-[#174660]">AaBbCcYyZz</div>
                </td>
                <td className="p-0">
                  <div className="flex h-[19px] w-[245px] border border-[#bbb] bg-white text-[#222]">
                    <input aria-label="Applies to" defaultValue="=$A$2:$G$15" className="min-w-0 flex-1 pl-[3px] outline-none" />
                    <button aria-label="Collapse range" className="flex w-[18px] items-center justify-center border border-[#bbb] bg-[#f0f0f0]"><CollapseRefIcon /></button>
                  </div>
                </td>
                <td className="p-0 text-center">
                  <input type="checkbox" aria-label="Stop if true" className="size-[11px] appearance-none border border-[#444] bg-white align-middle" />
                </td>
              </tr>
            </tbody>
          </table>
        </div>
      </div>
      <div className="flex h-[22px] items-end justify-end gap-[9px] pr-[5px] pb-[1px]">
        <DialogButton primary className="h-[18px] w-[62px]">OK</DialogButton>
        <DialogButton className="h-[18px] w-[62px]">Cancel</DialogButton>
        <DialogButton className="h-[18px] w-[62px]">Apply</DialogButton>
      </div>
    </div>
  );
}

function TitleBar() {
  return (
    <header className="flex h-10 items-center">
      <div className="flex w-[410px] shrink-0 items-center text-[10px] text-[#666]">
        <svg width="7" height="14" viewBox="0 0 7 14"><path d="M0 0h7v5H0z" fill="#8fdc5c" /><path d="M0 4h7v10H0z" fill="#1f8f3c" /></svg>
        <button className="ml-5 flex items-center gap-[2px]">
          Excel Basics
          <ThinChevron className="h-[5px] w-2" />
        </button>
      </div>
      <div className="flex h-[27px] w-[312px] items-center gap-[10px] rounded border border-[#444] bg-[#141414] pl-[11px]">
        <svg width="13" height="13" viewBox="0 0 13 13" fill="none" stroke="#777"><circle cx="8" cy="5" r="4" /><path d="M5 8 .5 12.500" /></svg>
        <input aria-label="Search" placeholder="Search" className="flex-1 bg-transparent text-[11px] outline-none placeholder:text-[#666]" />
      </div>
      <div className="flex flex-1 items-center justify-end pr-[15px] text-[#6a6a6a]">
        <svg width="13" height="13" viewBox="0 0 13 13"><path d="M6.500 0 13 13H0z" fill="#f0bb4d" /><path d="M6 4h1.500v5H6zM6 10h1.500v1.500H6z" fill="#5a3b00" /></svg>
        <button aria-label="Account" className="ml-2 size-5 rounded-full bg-[#8a1a9b] text-[9px] text-[#f2d9f6]">MV</button>
        <button aria-label="Minimize" className="ml-[26px] flex h-3 w-[9px] items-center"><span className="block h-px w-full bg-[#5a5a5a]" /></button>
        <button aria-label="Restore" className="ml-8">
          <svg width="9" height="9" viewBox="0 0 9 9" fill="none" stroke="currentColor"><path d="M.5 2.500h6v6h-6zM2.500 2.500v-2h6v6h-2" /></svg>
        </button>
        <button aria-label="Close" className="ml-8"><CloseX size={9} /></button>
      </div>
    </header>
  );
}

const TABS = ["File", "Home", "Insert", "Draw", "Page Layout", "Formulas", "Data", "Review", "View", "Automate", "Help"];

function TabBar() {
  return (
    <div className="flex h-[26px] items-center text-[#f0f0f0]">
      <nav className="-ml-[2px] flex gap-4 text-[11px] leading-[18px]">
        {TABS.map((t) => (
          <a key={t} href="#" className={`mt-[2px] border-b-2 whitespace-nowrap first:mr-[5px] ${t === "Home" ? "border-[#5fbf7f] font-bold" : "border-transparent"}`}>{t}</a>
        ))}
      </nav>
      <div className="flex flex-1 justify-end gap-[6px] pr-[10px] text-[11px]">
        <button className="flex h-[21px] items-center gap-[3px] rounded-[3px] border border-[#666] bg-[#292929] px-[3px]">
          <svg width="10" height="9" viewBox="0 0 10 9" fill="none" stroke="currentColor"><path d="M.5.5h9v6H5l-2 2v-2H.5z" /></svg>
          Comments
        </button>
        <button className="flex h-[21px] items-center gap-[3px] rounded-[3px] bg-[#33a15c] px-[3px] text-[#0b2a16]">
          <svg width="10" height="10" viewBox="0 0 10 10" fill="none" stroke="currentColor"><path d="M4 3.500H.5v6h8V7M3 7c0-3 2-4 4-4V1l2.500 2.500L7 6V4.500" /></svg>
          Share
          <Chevron size={7} />
        </button>
      </div>
    </div>
  );
}

function StatusBar() {
  return (
    <footer className="flex h-5 items-center bg-[#161616] pr-[10px] text-[10px] text-[#e6e6e6]">
      <span>ady</span>
      <svg width="13" height="13" viewBox="0 0 13 13" className="ml-4" fill="none" stroke="currentColor">
        <circle cx="6" cy="2" r="1.500" /><path d="M1 4.500 4.500 6 3 12M11 4.500 7.500 6l.5 2M4.500 6h3M8 8.500l4 4m0-4-4 4" />
      </svg>
      <span className="ml-[2px] font-bold whitespace-nowrap">Accessibility: Investigate</span>
      <span className="ml-auto">Sum: 790437</span>
      <button aria-label="Normal view" className="ml-[15px] flex h-5 w-[34px] items-center justify-center bg-[#262626]">
        <svg width="11" height="11" viewBox="0 0 11 11" fill="none" stroke="currentColor"><path d="M.5.5h10v10H.5zM4 .5v10M7 .5v10M.5 4h10M.5 7h10" /></svg>
      </button>
      <button aria-label="Page layout view" className="flex w-[34px] justify-center">
        <svg width="12" height="11" viewBox="0 0 12 11" fill="none" stroke="currentColor"><path d="M.5.5h11v10H.5zM3 2.500h6v6H3zM4.500 4h3M4.500 5.500h3M4.500 7h3" /></svg>
      </button>
      <button aria-label="Page break view" className="flex w-[34px] justify-center">
        <svg width="12" height="11" viewBox="0 0 12 11" fill="none" stroke="currentColor"><path d="M.5.5h11v10H.5zM4.500.5v6M8 .5v6H.5" /></svg>
      </button>
      <button aria-label="Zoom out" className="ml-1 flex h-3 w-[7px] items-center"><span className="block h-px w-full bg-current" /></button>
      <input
        type="range"
        aria-label="Zoom"
        min={10}
        max={185}
        defaultValue={85}
        className="ml-1 h-[10px] w-[85px] appearance-none bg-[linear-gradient(#888,#888)] bg-[length:100%_1px] bg-center bg-no-repeat [&::-webkit-slider-thumb]:h-[9px] [&::-webkit-slider-thumb]:w-[4px] [&::-webkit-slider-thumb]:appearance-none [&::-webkit-slider-thumb]:bg-[#bbb]"
      />
      <button aria-label="Zoom in" className="ml-1 flex items-center">
        <svg width="7" height="7" viewBox="0 0 7 7" stroke="currentColor"><path d="M0 3.500h7M3.500 0v7" /></svg>
      </button>
      <span className="ml-[11px]">85%</span>
    </footer>
  );
}

export default function App() {
  return (
    <main className="min-h-screen bg-[#fcfcfc] p-[19px] font-['Noto_Sans',sans-serif]">
      <section className="h-[490px] overflow-hidden bg-[#0a0a0a]">
        <CroppedRibbon />
        <FormulaBar cell="G1" value="Sales" large />
        <div className="relative h-[413px]">
          <SalesSheet />
          <div className="absolute inset-x-0 top-0">
            <GreaterThanDialog />
          </div>
        </div>
      </section>

      <section className="relative mt-[21px] mr-6 overflow-hidden bg-[#0a0a0a]">
        <TitleBar />
        <TabBar />
        <Ribbon />
        <FormulaBar cell="2" value="10300" />
        <div className="flex h-[420px] pl-[2px]">
          <div className="min-w-0 flex-1 overflow-hidden">
            <DateSheet />
          </div>
          <div className="flex w-[18px] shrink-0 flex-col items-center gap-1 pt-1 pb-[1px]">
            <svg width="8" height="7" fill="#aaa"><path d="M4 0 8 6H0z" /></svg>
            <div className="w-[7px] flex-1 rounded-full bg-[#9a9a9a]" />
            <svg width="8" height="7" fill="#aaa"><path d="M0 0h8L4 6z" /></svg>
          </div>
        </div>
        <div className="flex h-[26px] items-center text-[#e6e6e6]">
          <ThinChevron className="ml-[2px] rotate-90 text-[#aaa]" />
          <ThinChevron className="ml-[18px] -rotate-90 text-[#aaa]" />
          <a href="#" className="ml-[45px] text-[11px]">EB_O1</a>
          <div className="ml-[400px] h-[7px] flex-1 rounded-full bg-[#9a9a9a]" />
          <svg width="6" height="8" className="mr-5 ml-10" fill="#bbb"><path d="M0 0v8l6-4z" /></svg>
        </div>
        <StatusBar />
        <RulesDialog />
      </section>
    </main>
  );
}
